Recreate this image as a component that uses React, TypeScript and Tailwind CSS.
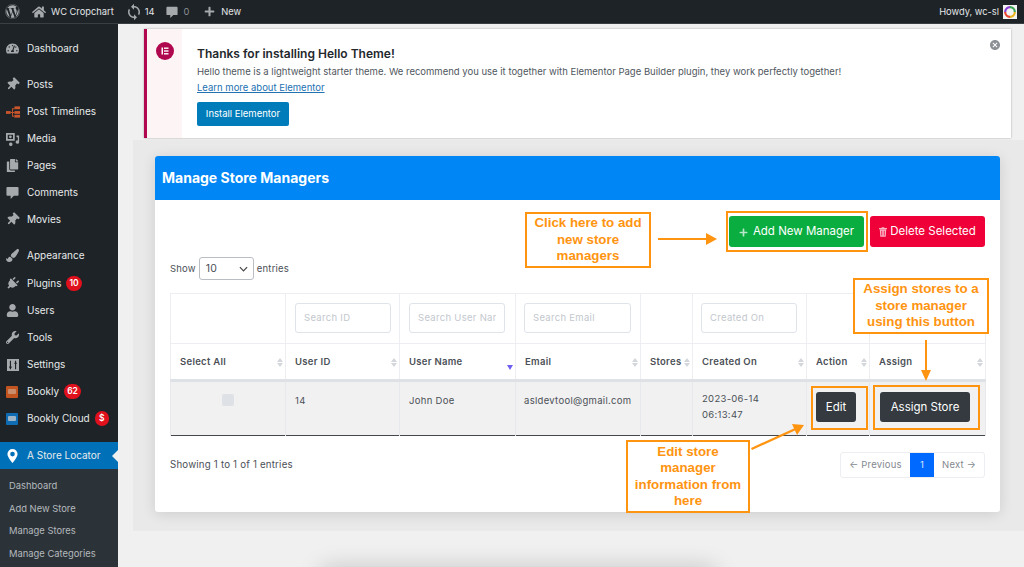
import React from "react";
import { FaWordpress, FaHome, FaPlus, FaThumbtack, FaCopy, FaPaintBrush, FaPlug, FaUser, FaWrench, FaTachometerAlt } from "react-icons/fa";
import { MdSync, MdCancel } from "react-icons/md";

const Bubble = ({ cls }: { cls: string }) => (
  <svg viewBox="0 0 14 14" className={cls} fill="currentColor">
    <path d="M1.500 1h11a1 1 0 0 1 1 1v7.500a1 1 0 0 1-1 1H8.500L5 14v-3.500H1.500a1 1 0 0 1-1-1V2a1 1 0 0 1 1-1z" />
  </svg>
);
const Media = () => (
  <svg viewBox="0 0 16 16" className="w-[14px] h-[14px]" fill="currentColor">
    <path d="M0 1h10v9H0z M2 3v5h6V3z" fillRule="evenodd" />
    <circle cx="5" cy="5.500" r="1.600" />
    <path d="M12 4h3v7.500a2 2 0 1 1-1.500-1.900V6H12zM5 12a2 2 0 1 1 0 3.900A2 2 0 0 1 5 12z" />
  </svg>
);
const Timeline = () => (
  <svg viewBox="0 0 16 12" className="w-[15px] h-[12px]" fill="#c8552b">
    <rect x="0" y="5" width="5" height="3" />
    <rect x="9" y="0" width="6" height="3" />
    <rect x="9" y="5" width="6" height="3" />
    <rect x="9" y="9" width="6" height="3" />
    <path d="M5 6h4v1H5zM6.500 2h2.500v1H7.500v7h1.500v1H6.500z" />
  </svg>
);
const SettingsIcon = () => (
  <svg viewBox="0 0 14 14" className="w-[12px] h-[12px] ml-[1px]">
    <rect width="14" height="14" fill="#a7aaad" />
    <path d="M4 2v10M10 2v10M2.500 9.500h3M8.500 5h3" stroke="#1d2327" strokeWidth="1.300" />
  </svg>
);
const Bookly = ({ color, inner }: { color: string; inner: string }) => (
  <span className="w-[12px] h-[12px] rounded-[1px] flex items-center justify-center" style={{ background: color }}>
    <span className="w-[8px] h-[5px] rounded-[1px]" style={{ background: inner }} />
  </span>
);
const Pin = () => (
  <svg viewBox="0 0 14 18" className="w-[11px] h-[14px] ml-[1px]">
    <path d="M7 0a6.500 6.500 0 0 0-6.500 6.500C.5 11 7 18 7 18s6.500-7 6.500-11.500A6.500 6.500 0 0 0 7 0zm0 9.500a3 3 0 1 1 0-6 3 3 0 0 1 0 6z" fill="#fff" />
  </svg>
);
const Badge = ({ children }: { children: React.ReactNode }) => (
  <span className="ml-[5px] h-[15px] min-w-[14px] px-[3px] rounded-full bg-[#e0101c] text-white text-[8.500px] font-semibold flex items-center justify-center">{children}</span>
);

const Item = ({ icon, label, badge, cls }: { icon: React.ReactNode; label: string; badge?: React.ReactNode; cls: string }) => (
  <div className={`flex items-center ${cls}`}>
    <span className="w-[27px] pl-[6px] shrink-0 flex items-center text-[#a7aaad] text-[13px]">{icon}</span>
    <span className="text-[#e8eaeb] text-[10px] whitespace-nowrap">{label}</span>
    {badge}
  </div>
);

const Sidebar = () => (
  <aside className="w-[118px] shrink-0 bg-[#1d2327] flex flex-col pt-[11px]">
    <Item cls="h-[27px]" icon={<FaTachometerAlt />} label="Dashboard" />
    <div className="h-[9px]" />
    <Item cls="h-[27px]" icon={<FaThumbtack className="rotate-45" />} label="Posts" />
    <Item cls="h-[27px]" icon={<Timeline />} label="Post Timelines" />
    <Item cls="h-[27px]" icon={<Media />} label="Media" />
    <Item cls="h-[27px]" icon={<FaCopy />} label="Pages" />
    <Item cls="h-[27px]" icon={<Bubble cls="w-[13px] h-[13px]" />} label="Comments" />
    <Item cls="h-[27px]" icon={<FaThumbtack className="rotate-45" />} label="Movies" />
    <div className="h-[9px]" />
    <Item cls="h-[27px]" icon={<FaPaintBrush />} label="Appearance" />
    <Item cls="h-[28px]" icon={<FaPlug className="rotate-45" />} label="Plugins" badge={<Badge>10</Badge>} />
    <Item cls="h-[27px]" icon={<FaUser />} label="Users" />
    <Item cls="h-[27px]" icon={<FaWrench />} label="Tools" />
    <Item cls="h-[27px]" icon={<SettingsIcon />} label="Settings" />
    <Item cls="h-[27px]" icon={<Bookly color="#c1541f" inner="#c98d6b" />} label="Bookly" badge={<Badge>62</Badge>} />
    <Item cls="h-[27px]" icon={<Bookly color="#0f6cb2" inner="#9fb4c4" />} label="Bookly Cloud" badge={<Badge>$</Badge>} />
    <div className="h-[10px]" />
    <div className="relative">
      <Item cls="h-[27px] bg-[#0071b9]" icon={<Pin />} label="A Store Locator" />
      <span className="absolute right-0 top-[8px] border-y-[6px] border-y-transparent border-r-[6px] border-r-[#f0f0f0]" />
    </div>
    <div className="flex-1 bg-[#2c3338] pt-[6px] pl-[9px] text-[#b4b9be] text-[9.400px]">
      <div className="h-[22.500px] flex items-center">Dashboard</div>
      <div className="h-[22.500px] flex items-center">Add New Store</div>
      <div className="h-[22.500px] flex items-center">Manage Stores</div>
      <div className="h-[22.500px] flex items-center">Manage Categories</div>
    </div>
  </aside>
);

const TopBar = () => (
  <header className="h-[24px] shrink-0 bg-[#1d2327] border-b border-[#3a3f44] flex items-center text-[#e4e6e7] text-[9.300px]">
    <FaWordpress className="ml-[5px] text-[#a7aaad] text-[15px]" />
    <FaHome className="ml-[12px] text-[#a7aaad] text-[14px]" />
    <span className="ml-[5px]">WC Cropchart</span>
    <MdSync className="ml-[11px] text-[#a7aaad] text-[18px]" />
    <span className="ml-[2px]">14</span>
    <Bubble cls="ml-[12px] w-[12px] h-[12px] text-[#a7aaad]" />
    <span className="ml-[5px] text-[#8c8f94]">0</span>
    <FaPlus className="ml-[15px] text-[#a7aaad] text-[11px]" />
    <span className="ml-[6px]">New</span>
    <span className="ml-auto">Howdy, wc-sl</span>
    <svg viewBox="0 0 16 16" className="ml-[4px] mr-[7px] w-[14px] h-[14px]">
      <rect width="16" height="16" fill="#f4f4f4" />
      <path d="M8 2.500a5.500 5.500 0 0 1 5.500 5.500" stroke="#3aa655" strokeWidth="2.500" fill="none" />
      <path d="M13.500 8A5.500 5.500 0 0 1 8 13.500" stroke="#e8b21a" strokeWidth="2.500" fill="none" />
      <path d="M8 13.500A5.500 5.500 0 0 1 2.500 8" stroke="#e8452c" strokeWidth="2.500" fill="none" />
      <path d="M2.500 8A5.500 5.500 0 0 1 8 2.500" stroke="#8a3fd1" strokeWidth="2.500" fill="none" />
    </svg>
  </header>
);

const Notice = () => (
  <section className="ml-[26px] mt-[5px] w-[867px] h-[109px] shrink-0 bg-white border-l-[3px] border-l-[#b0084e] shadow-[0_0_2px_rgba(0,0,0,0.3)] flex relative">
    <div className="w-[35px] bg-[#fdf4f5] pt-[13px] flex justify-center">
      <span className="w-[18px] h-[18px] rounded-full bg-[#b0084e] flex items-center justify-center">
        <svg viewBox="0 0 10 10" className="w-[10px] h-[10px]" fill="#fff">
          <rect x="1.500" y="1.500" width="1.500" height="7" />
          <rect x="4" y="1.500" width="4.500" height="1.400" />
          <rect x="4" y="4.300" width="4.500" height="1.400" />
          <rect x="4" y="7.100" width="4.500" height="1.400" />
        </svg>
      </span>
    </div>
    <div className="pl-[15px] pt-[16px]">
      <h2 className="text-[12px] leading-[18px] font-semibold text-[#23282d]">Thanks for installing Hello Theme!</h2>
      <p className="mt-[2px] text-[9.500px] leading-[14px] text-[#50575e]">Hello theme is a lightweight starter theme. We recommend you use it together with Elementor Page Builder plugin, they work perfectly together!</p>
      <a className="block mt-[2px] text-[9.500px] leading-[14px] text-[#2271b1] underline">Learn more about Elementor</a>
      <button className="mt-[7px] w-[92px] h-[24px] pt-[1px] rounded-[2px] bg-[#007cba] text-white text-[9.500px]">Install Elementor</button>
    </div>
    <MdCancel className="absolute right-[10px] top-[10px] text-[#8c8f94] text-[12px]" />
  </section>
);

const Sort = ({ active }: { active?: boolean }) => (
  <span className="flex flex-col gap-[1px] shrink-0">
    {active ? (
      <>
        <span className="h-[4px]" />
        <span className="mt-[6px] border-x-[3.500px] border-x-transparent border-t-[5px] border-t-[#6f5ff0]" />
      </>
    ) : (
      <>
        <span className="border-x-[3px] border-x-transparent border-b-[4px] border-b-[#d3d6da]" />
        <span className="border-x-[3px] border-x-transparent border-t-[4px] border-t-[#d3d6da]" />
      </>
    )}
  </span>
);

const Search = ({ p, cls }: { p: string; cls: string }) => (
  <input readOnly placeholder={p} className={`block h-[30px] rounded-[3px] border border-[#dfe3ea] px-[8px] text-[9.500px] placeholder:text-[#c3c7ce] bg-white outline-none ${cls}`} />
);

const heads: [string, boolean?][] = [["Select All"], ["User ID"], ["User Name", true], ["Email"], ["Stores"], ["Created On"], ["Action"], ["Assign"]];

const Table = () => (
  <table className="w-[815px] table-fixed border-collapse text-[9.500px] tracking-[0.3px] text-[#4b5057]">
    <colgroup>
      <col className="w-[115px]" /><col className="w-[114px]" /><col className="w-[116px]" /><col className="w-[125px]" />
      <col className="w-[52px]" /><col className="w-[114px]" /><col className="w-[63px]" /><col className="w-[116px]" />
    </colgroup>
    <thead>
      <tr className="h-[50px]">
        <td className="border border-[#eceef1]" />
        <td className="border border-[#eceef1] pl-[9px] pb-[2px]"><Search cls="w-[96px]" p="Search ID" /></td>
        <td className="border border-[#eceef1] pl-[9px] pb-[2px]"><Search cls="w-[96px]" p="Search User Name" /></td>
        <td className="border border-[#eceef1] pl-[8px] pb-[2px]"><Search cls="w-[107px]" p="Search Email" /></td>
        <td className="border border-[#eceef1]" />
        <td className="border border-[#eceef1] pl-[8px] pb-[2px]"><Search cls="w-[96px]" p="Created On" /></td>
        <td className="border border-[#eceef1]" />
        <td className="border border-[#eceef1]" />
      </tr>
      <tr className="h-[37px]">
        {heads.map(([h, a]) => (
          <th key={h} className="border border-[#eceef1] border-b-[3px] border-b-[#dee2e6] font-semibold text-left pl-[9px] pr-[2px] pt-[1px]">
            <span className="flex items-center justify-between"><span>{h}</span><Sort active={a} /></span>
          </th>
        ))}
      </tr>
    </thead>
    <tbody>
      <tr className="h-[55px] bg-[#f1f1f1] border-b-[1.500px] border-b-[#44484d] align-top">
        <td className="border-x border-[#e6e8eb] pt-[12px]"><span className="mx-auto block w-[12px] h-[12px] rounded-[2px] bg-[#dee2e6]" /></td>
        <td className="border-x border-[#e6e8eb] pl-[9px] pt-[12px]">14</td>
        <td className="border-x border-[#e6e8eb] pl-[9px] pt-[12px]">John Doe</td>
        <td className="border-x border-[#e6e8eb] pl-[8px] pt-[12px] whitespace-nowrap">asldevtool@gmail.com</td>
        <td className="border-x border-[#e6e8eb]" />
        <td className="border-x border-[#e6e8eb] pl-[9px] pt-[9px] leading-[16px]">2023-06-14<br />06:13:47</td>
        <td className="border-x border-[#e6e8eb] pl-[9px] pt-[10px]">
          <button className="w-[40px] h-[30px] pt-[2px] rounded-[3px] bg-[#343a40] text-white text-[11.500px] tracking-normal">Edit</button>
        </td>
        <td className="border-x border-[#e6e8eb] pl-[10px] pt-[10px]">
          <button className="w-[90px] h-[30px] pt-[2px] rounded-[3px] bg-[#343a40] text-white text-[11.500px] tracking-normal">Assign Store</button>
        </td>
      </tr>
    </tbody>
  </table>
);

const Card = () => (
  <div className="ml-[22px] w-[845px] h-[356px] bg-white rounded-[3px] shadow-[0_2px_14px_rgba(0,0,0,0.12)] overflow-hidden">
    <div className="h-[44px] pb-[1px] bg-[#0087f5] flex items-center px-[7px] text-white text-[14px] font-bold">Manage Store Managers</div>
    <div className="px-[15px] pt-[16px]">
      <div className="flex justify-end gap-[6px]">
        <button className="w-[135px] h-[31px] pt-[1px] rounded-[3px] bg-[#0aae40] text-white text-[11.500px] flex items-center justify-center gap-[5px]">
          <FaPlus className="text-[9px] text-[#b8e6c8]" /> Add New Manager
        </button>
        <button className="w-[115px] h-[31px] pt-[1px] rounded-[3px] bg-[#ef0038] text-white text-[11.500px] flex items-center justify-center gap-[3px]">
          <svg viewBox="0 0 10 12" className="w-[8px] h-[10px] opacity-70" fill="#fff"><path d="M3.500 0h3l.5 1h3v1.500H0V1h3zM1 3h8l-.6 9H1.600zM3 4.500v6h1v-6zm3 0v6h1v-6z" fillRule="evenodd" /></svg>
          Delete Selected
        </button>
      </div>
      <div className="mt-[10px] h-[23px] flex items-center text-[9.500px] text-[#4b5057] tracking-[0.2px]">
        <span className="pt-[1px]">Show</span>
        <span className="mx-[3px] w-[55px] h-[23px] rounded-[3px] border border-[#b9bec5] flex items-center justify-between pl-[6px] pr-[5px] text-[10.500px]">
          10
          <svg viewBox="0 0 10 6" className="w-[9px] h-[6px]"><path d="M1 1l4 4 4-4" fill="none" stroke="#444" strokeWidth="1.300" /></svg>
        </span>
        <span className="pt-[1px]">entries</span>
      </div>
      <div className="mt-[13px]"><Table /></div>
      <div className="mt-[16px] flex items-center justify-between text-[9.700px] text-[#4b5057] tracking-[0.2px]">
        <span className="pt-[1px]">Showing 1 to 1 of 1 entries</span>
        <div className="flex h-[26px] w-[145px] rounded-[3px] border border-[#eceef1] text-[9.500px] text-[#83898f]">
          <span className="w-[69px] flex items-center justify-center">← Previous</span>
          <span className="w-[24px] bg-[#0069ff] text-[#dbe8ff] flex items-center justify-center">1</span>
          <span className="flex-1 flex items-center justify-center">Next →</span>
        </div>
      </div>
    </div>
  </div>
);

const Note = ({ cls, children }: { cls: string; children: React.ReactNode }) => (
  <div className={`absolute border-2 border-[#ff9411] bg-white text-[#ff9411] text-center font-bold text-[13.300px] leading-[16.500px] flex items-center justify-center ${cls}`} style={{ fontFamily: '"Liberation Sans", Arial, sans-serif' }}>
    <span>{children}</span>
  </div>
);
const Outline = ({ cls }: { cls: string }) => <div className={`absolute border-2 border-[#ff9411] ${cls}`} />;

const Annotations = () => (
  <>
    <Note cls="left-[525px] top-[212px] w-[126px] h-[56px]">Click here to add<br />new store<br />managers</Note>
    <Note cls="left-[853px] top-[278px] w-[136px] h-[56px]">Assign stores to a<br />store manager<br />using this button</Note>
    <Note cls="left-[626px] top-[440px] w-[124px] h-[73px]">Edit store<br />manager<br />information from<br />here</Note>
    <Outline cls="left-[726px] top-[211px] w-[142px] h-[41px]" />
    <Outline cls="left-[811px] top-[386px] w-[57px] h-[44px]" />
    <Outline cls="left-[873px] top-[385px] w-[107px] h-[45px]" />
    <svg className="absolute left-0 top-0 w-[1024px] h-[567px] pointer-events-none" viewBox="0 0 1024 567" fill="#ff9411" stroke="none">
      <path d="M658 238h49v2h-49z" />
      <path d="M706 233l11 6-11 6z" />
      <path d="M925 340h2v31h-2z" />
      <path d="M921 370h10l-5 11z" />
      <path d="M751 448l44-20 1 2-44 20z" />
      <path d="M792 424l12 1-7 10z" />
    </svg>
  </>
);

export default function App() {
  return (
    <div className="relative w-[1024px] h-[567px] overflow-hidden bg-[#f0f0f0] flex flex-col" style={{ fontFamily: 'Inter, "Liberation Sans", sans-serif' }}>
      <TopBar />
      <div className="flex-1 flex min-h-0">
        <Sidebar />
        <main className="flex-1 flex flex-col relative">
          <Notice />
          <section className="ml-[15px] mt-[2px] h-[391px] shrink-0 bg-[#e9e9e9] pt-[16px]">
            <Card />
          </section>
          <div className="absolute left-[204px] top-[545px] w-[393px] h-[20px] shadow-[0_0_24px_rgba(0,0,0,0.22)]" />
        </main>
      </div>
      <Annotations />
    </div>
  );
}
